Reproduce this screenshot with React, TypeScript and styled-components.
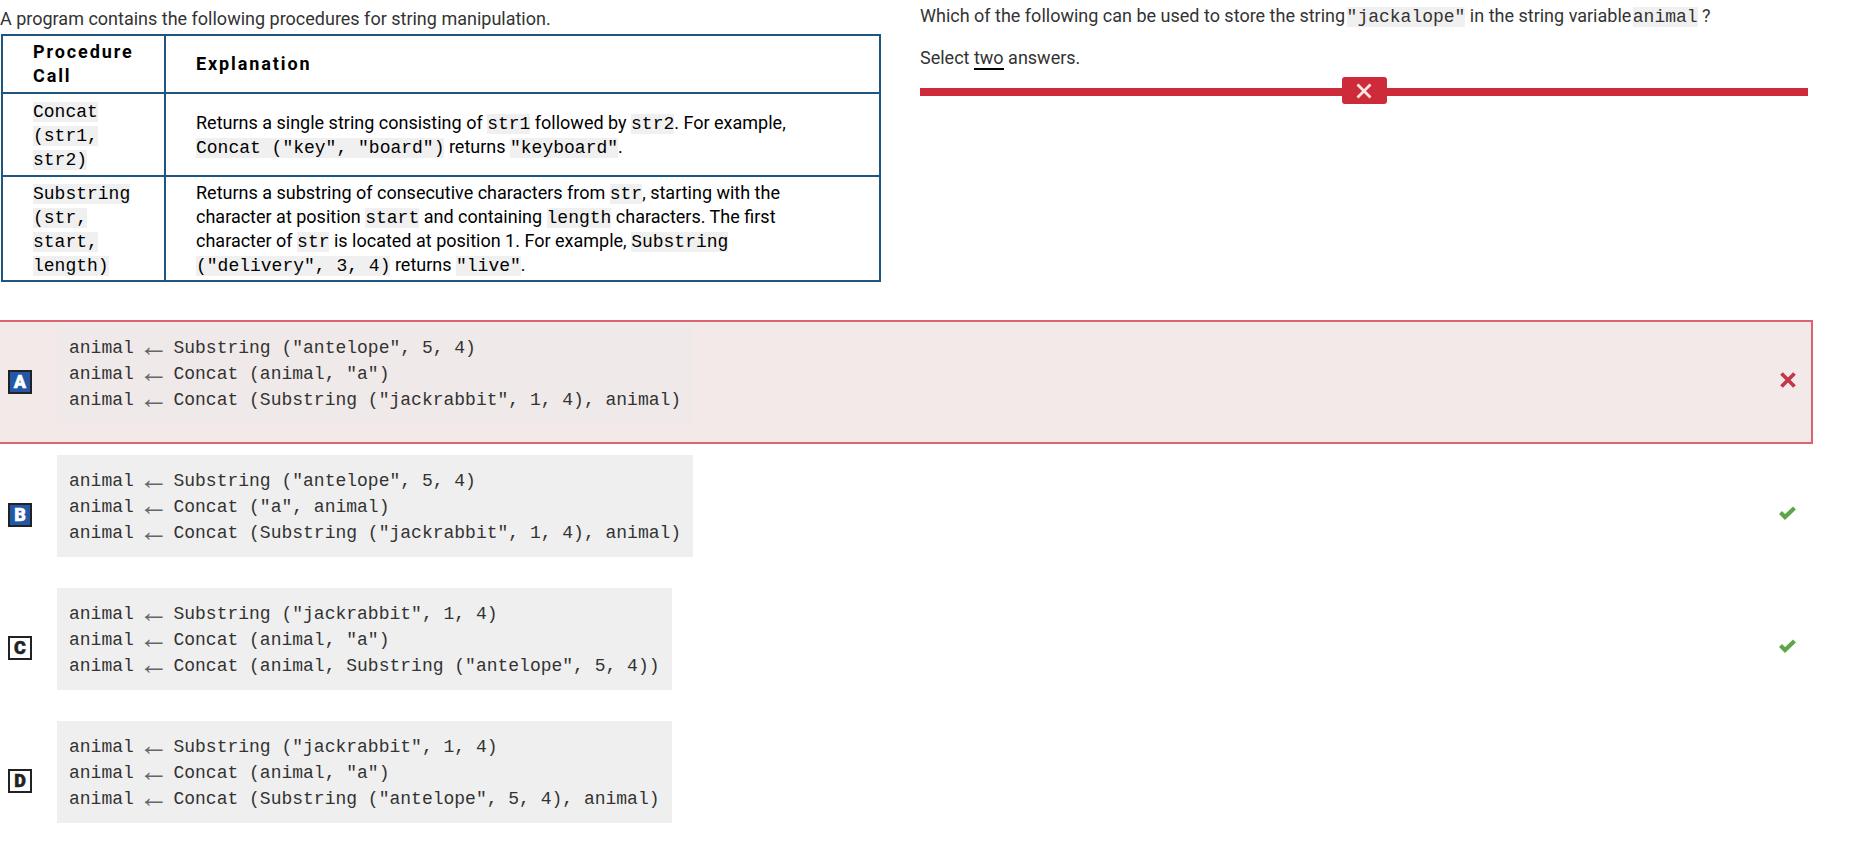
import React from "react";
import styled, { createGlobalStyle } from "styled-components";

const Global = createGlobalStyle`
  html, body { margin: 0; padding: 0; background: #fff; }
  body { font-family: Roboto, "Liberation Sans", sans-serif; font-size: 18px; line-height: 24px; color: #333; overflow: hidden; }
`;

const Page = styled.div`
  width: 1860px;
  height: 844px;
`;
const Top = styled.div`
  display: grid;
  grid-template-columns: 884px 888px;
  column-gap: 36px;
  height: 282px;
  margin-bottom: 38px;
`;
const Left = styled.div`
  padding-top: 7px;
`;
const Right = styled.div`
  padding-top: 4px;
`;
const Para = styled.p`
  margin: 0;
  height: 27px;
`;
const QPara = styled.p`
  margin: 0 0 18px;
  height: 24px;
`;
const Code = styled.code`
  font-family: "Liberation Mono", monospace;
  font-size: 18px;
  line-height: 20px;
  background: #f0f0f0;
`;
const QuestionCode = styled(Code)`
  margin-left: -3px;
`;
const Underlined = styled.span`
  border-bottom: 2px solid #000;
`;
const Divider = styled.div`
  width: 888px;
  height: 8px;
  background: #cd2b39;
  display: flex;
  justify-content: center;
  align-items: center;
  margin-top: 18px;
`;
const DividerButton = styled.div`
  width: 45px;
  height: 27px;
  margin-top: -3px;
  border-radius: 3px;
  background: #cd2b39;
  display: flex;
  justify-content: center;
  align-items: center;
  flex: none;
`;
const Table = styled.table`
  margin-left: 1px;
  width: 880px;
  border-collapse: collapse;
  table-layout: fixed;
  color: #000;
`;
const HeadCell = styled.th`
  border: 2px solid #1f5680;
  height: 56px;
  padding: 0 30px;
  text-align: left;
  font-size: 18px;
  letter-spacing: 1.9px;
  font-weight: 700;
`;
const Cell = styled.td<{ $tight?: boolean }>`
  border: 2px solid #1f5680;
  padding: ${(p) => (p.$tight ? "4px 30px 3px" : "5px 30px 4px")};
`;
const WideCell = styled(Cell)`
  padding-right: 45px;
`;
const Answers = styled.div`
  display: flex;
  flex-direction: column;
  gap: 9px;
`;
const Row = styled.div<{ $wrong?: boolean }>`
  width: 1813px;
  box-sizing: border-box;
  display: flex;
  align-items: center;
  border: 2px solid ${(p) => (p.$wrong ? "#dc6472" : "transparent")};
  border-left: 0;
  background: ${(p) => (p.$wrong ? "#f4e9e9" : "transparent")};
`;
const Badge = styled.div<{ $on?: boolean }>`
  box-sizing: border-box;
  width: 24px;
  height: 24px;
  margin-left: 8px;
  border: 2px solid #222;
  background: ${(p) => (p.$on ? "#2358a8" : "#fff")};
  color: ${(p) => (p.$on ? "#fff" : "#222")};
  font-weight: 900;
  font-size: 18px;
  -webkit-text-stroke: 0.5px currentColor;
  line-height: 20px;
  text-align: center;
  flex: none;
`;
const CodeBox = styled.div<{ $wrong?: boolean }>`
  align-self: flex-start;
  margin: 0 0 18px 25px;
  padding: 13px 12px 11px 12px;
  background: ${(p) => (p.$wrong ? "#efe9e9" : "#efefef")};
  font-family: "Liberation Mono", monospace;
  font-size: 18px;
  line-height: 26px;
  color: #333;
`;
const CodeLine = styled.div`
  white-space: pre;
  height: 26px;
`;
const Arrow = styled.span`
  display: inline-block;
  width: 18px;
  height: 0;
  overflow: visible;
  line-height: 0;
  font-family: "Liberation Serif", serif;
  font-size: 30px;
  text-align: center;
  position: relative;
  top: 3px;
  font-weight: 400;
  color: #666;
`;
const ArrowGlyph = styled.span`
  display: block;
  margin-left: -6px;
  width: 30px;
`;
const Mark = styled.svg`
  margin-left: auto;
  margin-right: 15px;
  margin-bottom: 4px;
  flex: none;
`;

const XMark = () => (
  <Mark width="16" height="16" viewBox="0 0 16 16">
    <path d="M1.5 1.5 L14.5 14.5 M14.5 1.5 L1.5 14.5" stroke="#c0394a" strokeWidth="3.8" fill="none" />
  </Mark>
);
const CheckMark = () => (
  <Mark width="17" height="14" viewBox="0 0 17 14">
    <path d="M1.5 6.5 L6 11 L15.5 2" stroke="#5fa64a" strokeWidth="4.2" fill="none" />
  </Mark>
);

const L = ({ rest }: { rest: string }) => (
  <CodeLine>
    animal <Arrow><ArrowGlyph>←</ArrowGlyph></Arrow> {rest}
  </CodeLine>
);

const answers = [
  { id: "A", on: true, wrong: true, lines: ['Substring ("antelope", 5, 4)', 'Concat (animal, "a")', 'Concat (Substring ("jackrabbit", 1, 4), animal)'] },
  { id: "B", on: true, ok: true, lines: ['Substring ("antelope", 5, 4)', 'Concat ("a", animal)', 'Concat (Substring ("jackrabbit", 1, 4), animal)'] },
  { id: "C", ok: true, lines: ['Substring ("jackrabbit", 1, 4)', 'Concat (animal, "a")', 'Concat (animal, Substring ("antelope", 5, 4))'] },
  { id: "D", lines: ['Substring ("jackrabbit", 1, 4)', 'Concat (animal, "a")', 'Concat (Substring ("antelope", 5, 4), animal)'] },
];

export default function App() {
  return (
    <Page>
      <Global />
      <Top>
        <Left>
          <Para>A program contains the following procedures for string manipulation.</Para>
          <Table>
            <colgroup>
              <col style={{ width: 163 }} />
              <col />
            </colgroup>
            <thead>
              <tr>
                <HeadCell>Procedure Call</HeadCell>
                <HeadCell>Explanation</HeadCell>
              </tr>
            </thead>
            <tbody>
              <tr>
                <Cell><Code>Concat (str1, str2)</Code></Cell>
                <WideCell>
                  Returns a single string consisting of <Code>str1</Code> followed by <Code>str2</Code>. For example, <Code>Concat ("key", "board")</Code> returns <Code>"keyboard"</Code>.
                </WideCell>
              </tr>
              <tr>
                <Cell $tight><Code>Substring (str, start, length)</Code></Cell>
                <WideCell $tight>
                  Returns a substring of consecutive characters from <Code>str</Code>, starting with the character at position <Code>start</Code> and containing <Code>length</Code> characters. The first character of <Code>str</Code> is located at position 1. For example, <Code>Substring ("delivery", 3, 4)</Code> returns <Code>"live"</Code>.
                </WideCell>
              </tr>
            </tbody>
          </Table>
        </Left>
        <Right>
          <QPara>
            Which of the following can be used to store the string <QuestionCode>"jackalope"</QuestionCode> in the string variable <QuestionCode>animal</QuestionCode> ?
          </QPara>
          <QPara>
            Select <Underlined>two</Underlined> answers.
          </QPara>
          <Divider>
            <DividerButton>
              <svg width="16" height="16" viewBox="0 0 16 16">
                <path d="M1.5 1.5 L14.5 14.5 M14.5 1.5 L1.5 14.5" stroke="#fbe6e6" strokeWidth="2.8" fill="none" />
              </svg>
            </DividerButton>
          </Divider>
        </Right>
      </Top>
      <Answers>
        {answers.map((a) => (
          <Row key={a.id} $wrong={a.wrong}>
            <Badge $on={a.on}>{a.id}</Badge>
            <CodeBox $wrong={a.wrong}>
              {a.lines.map((t, i) => (
                <L key={i} rest={t} />
              ))}
            </CodeBox>
            {a.wrong && <XMark />}
            {a.ok && <CheckMark />}
          </Row>
        ))}
      </Answers>
    </Page>
  );
}
